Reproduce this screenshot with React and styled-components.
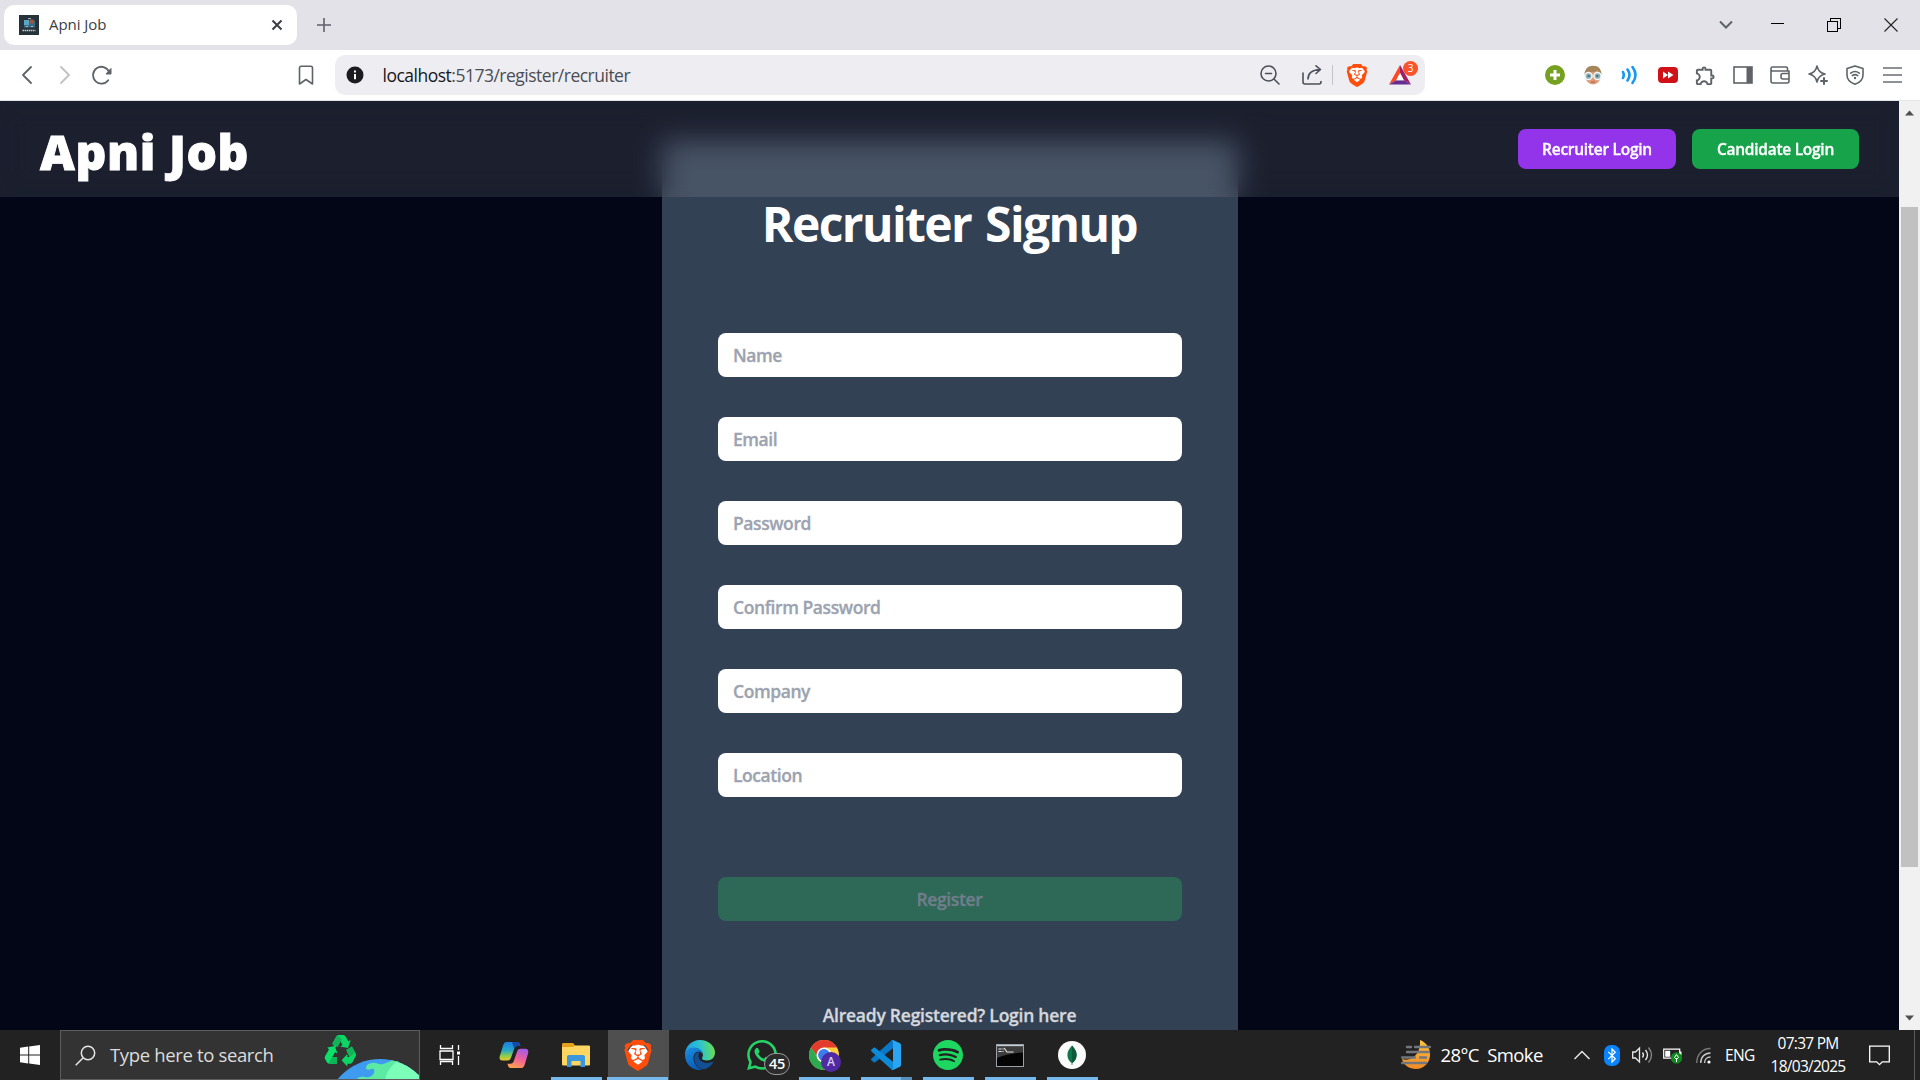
import React from "react";
import styled, { createGlobalStyle } from "styled-components";
import { SiBrave, SiWhatsapp, SiSpotify } from "react-icons/si";
import { MdOutlineExtension } from "react-icons/md";

const Global = createGlobalStyle`
  *, *::before, *::after { box-sizing: border-box; }
  html, body { margin: 0; padding: 0; overflow: hidden; background: #020617; }
  body { font-family: "Open Sans", "Noto Sans", sans-serif; }
  svg { display: block; flex: none; }
  button, input { font: inherit; border: 0; margin: 0; }
`;

const Desktop = styled.div`
  width: 1920px;
  height: 1080px;
  display: flex;
  flex-direction: column;
  overflow: hidden;
`;

/* ---------- browser chrome ---------- */
const TabStrip = styled.div`
  height: 50px;
  flex: none;
  background: #e3e2e8;
  display: flex;
  align-items: center;
  padding-left: 4px;
`;

const Tab = styled.div`
  width: 293px;
  height: 40px;
  border-radius: 10px;
  background: #fff;
  display: flex;
  align-items: center;
  padding: 0 12px 0 15px;
`;

const TabTitle = styled.span`
  flex: 1;
  margin-left: 10px;
  font-size: 15px;
  line-height: 20px;
  letter-spacing: -0.05px;
  color: #3b3e45;
  transform: translateY(-1px);
`;

const NewTab = styled.div`
  margin-left: 20px;
`;

const WindowControls = styled.div`
  margin-left: auto;
  height: 50px;
  display: flex;
  align-items: center;
`;

const Control = styled.div`
  width: ${(p) => p.$w}px;
  display: flex;
  justify-content: center;
`;

const Toolbar = styled.div`
  height: 51px;
  flex: none;
  background: #fff;
  border-bottom: 1px solid #e3e5ea;
  display: flex;
  align-items: center;
  padding-left: 8px;
`;

const NavSlot = styled.div`
  width: 37.5px;
  display: flex;
  justify-content: center;
  margin-left: ${(p) => p.$gap || 0}px;
`;

const Omnibox = styled.div`
  margin-left: 10px;
  width: 1090px;
  height: 40px;
  border-radius: 10px;
  background: #eeedf2;
  display: flex;
  align-items: center;
  padding-left: 11px;
`;

const Url = styled.span`
  flex: 1;
  margin-left: 18.5px;
  font-size: 17.5px;
  line-height: 24px;
  letter-spacing: -0.5px;
  color: #4b4d55;
  transform: translateY(-0.5px);
  b { font-weight: 400; color: #15161a; }
`;

const Separator = styled.div`
  width: 1px;
  height: 20px;
  background: #c3c3ca;
  margin: 0 12px 0 8px;
`;

const BadgeWrap = styled.div`
  position: relative;
  margin: 0 14px 0 20px;
`;

const RewardBadge = styled.span`
  position: absolute;
  top: -4px;
  right: -7px;
  width: 15px;
  height: 15px;
  border-radius: 50%;
  background: #fb542b;
  color: #fff;
  font-size: 10px;
  line-height: 15px;
  text-align: center;
`;

const Extensions = styled.div`
  margin-left: 111.5px;
  display: flex;
  align-items: center;
`;

/* ---------- page ---------- */
const Viewport = styled.div`
  flex: 1;
  min-height: 0;
  display: flex;
`;

const Page = styled.main`
  position: relative;
  flex: 1;
  height: 929px;
  overflow: hidden;
  background: #020617;
  display: flex;
  justify-content: center;
  align-items: flex-start;
  padding-top: 40px;
`;

const Header = styled.header`
  position: absolute;
  inset: 0 0 auto 0;
  height: 96px;
  padding: 0 40px;
  display: flex;
  justify-content: space-between;
  align-items: center;
  background: rgba(255, 255, 255, 0.1);
  backdrop-filter: blur(14px);
`;

const Brand = styled.h1`
  margin: 5px 0 0;
  font-family: "Noto Sans", "Open Sans", sans-serif;
  font-size: 48px;
  line-height: 48px;
  font-weight: 900;
  letter-spacing: 0.6px;
  -webkit-text-stroke: 0.9px currentColor;
  color: #fff;
`;

const HeaderActions = styled.div`
  display: flex;
  gap: 16px;
`;

const LoginButton = styled.button`
  width: ${(p) => p.$w}px;
  height: 40px;
  padding: 0;
  border-radius: 8px;
  background: ${(p) => p.$color};
  color: #fff;
  font-size: 15.5px;
  line-height: 24px;
  font-weight: 600;
  letter-spacing: -0.27px;
  -webkit-text-stroke: 0.3px currentColor;
`;

const Card = styled.form`
  width: 576px;
  height: 1000px;
  padding: 59px 56px;
  background: #334155;
  display: flex;
  flex-direction: column;
`;

const CardTitle = styled.h2`
  margin: 0;
  font-size: 48px;
  line-height: 48px;
  font-weight: 700;
  letter-spacing: -1.6px;
  word-spacing: 3px;
  color: #fff;
  text-align: center;
`;

const Fields = styled.div`
  margin-top: 85px;
  display: flex;
  flex-direction: column;
  gap: 40px;
`;

const Field = styled.input`
  width: 100%;
  height: 44px;
  border-radius: 8px;
  padding: 0 15.5px;
  background: #fff;
  font-size: 17.5px;
  font-weight: 600;
  letter-spacing: -0.42px;
  -webkit-text-stroke: 0.3px #9ca3af;
  &::placeholder { color: #9ca3af; opacity: 1; }
`;

const RegisterButton = styled.button`
  margin-top: 80px;
  height: 44px;
  border-radius: 8px;
  background: #2e6957;
  color: #717e8b;
  font-size: 17.5px;
  font-weight: 600;
  letter-spacing: -0.35px;
  -webkit-text-stroke: 0.3px currentColor;
`;

const LoginHint = styled.p`
  margin: 81px 0 0;
  font-size: 17.5px;
  line-height: 26px;
  font-weight: 600;
  letter-spacing: -0.24px;
  -webkit-text-stroke: 0.3px currentColor;
  color: #d4d8de;
  text-align: center;
`;

const Scrollbar = styled.div`
  width: 21px;
  flex: none;
  background: #f1f1f1;
  display: flex;
  flex-direction: column;
  align-items: center;
  padding: 9px 1px 9px 0;
`;

const Thumb = styled.div`
  width: 17px;
  height: 660px;
  margin-top: 91px;
  margin-bottom: auto;
  background: #c1c1c1;
`;

/* ---------- taskbar ---------- */
const Taskbar = styled.div`
  height: 50px;
  flex: none;
  background: #222222;
  display: flex;
  color: #fff;
`;

const Slot = styled.div`
  position: relative;
  width: ${(p) => p.$w || 62}px;
  height: 50px;
  display: flex;
  align-items: center;
  justify-content: center;
`;

const ActiveTile = styled.div`
  position: absolute;
  inset: 0 0.5px;
  background: #4f4f4f;
`;

const Underline = styled.div`
  position: absolute;
  bottom: 0;
  left: ${(p) => (p.$full ? 0 : 6)}px;
  width: ${(p) => (p.$full ? 61 : 51)}px;
  height: 3px;
  background: ${(p) => (p.$stack ? "linear-gradient(90deg, #76b9ed 40px, #5a8fbd 40px)" : "#76b9ed")};
`;

const IconLayer = styled.div`
  position: relative;
`;

const SearchBox = styled.div`
  width: 360px;
  height: 50px;
  border: 1px solid #5c5c5c;
  background: #333;
  display: flex;
  align-items: center;
  padding-left: 14px;
  overflow: hidden;
`;

const SearchText = styled.span`
  width: 164px;
  margin-left: 14px;
  font-size: 18.5px;
  line-height: 26px;
  letter-spacing: -0.35px;
  white-space: nowrap;
  color: #dcdcdc;
`;

const SearchArt = styled.div`
  margin-left: auto;
`;

const CountBadge = styled.span`
  position: absolute;
  left: 17px;
  top: 13px;
  width: 26px;
  height: 22px;
  border-radius: 11px;
  border: 1px solid #9a9a9a;
  background: #2b2b2b;
  color: #fff;
  font-size: 14.5px;
  font-weight: 600;
  letter-spacing: -0.4px;
  line-height: 20px;
  text-align: center;
`;

const ProfileBadge = styled.span`
  position: absolute;
  left: 12px;
  top: 12px;
  width: 20px;
  height: 20px;
  border-radius: 50%;
  background: #4f2ba3;
  color: #d9cdf2;
  font-size: 12px;
  font-weight: 600;
  line-height: 20px;
  text-align: center;
`;

const Tray = styled.div`
  margin-left: auto;
  width: 519.5px;
  display: flex;
  align-items: center;
`;

const Weather = styled.span`
  width: 104px;
  margin-left: 10px;
  font-size: 18.5px;
  line-height: 26px;
  white-space: pre;
  letter-spacing: -0.6px;
`;

const Lang = styled.span`
  width: 30px;
  margin-left: 14px;
  font-size: 15.5px;
  letter-spacing: -0.6px;
`;

const Clock = styled.div`
  width: 80px;
  margin-left: 13px;
  display: flex;
  flex-direction: column;
  align-items: center;
  font-size: 15.5px;
  line-height: 23px;
  letter-spacing: -0.75px;
  white-space: nowrap;
`;

const Gap = styled.div`
  width: ${(p) => p.$w}px;
  flex: none;
`;

const ShowDesktop = styled.div`
  margin-left: auto;
  width: 6px;
  height: 50px;
  border-left: 1px solid #5a5a5a;
`;

/* ---------- icons ---------- */
const line = { fill: "none", stroke: "#5f6368", strokeWidth: 1.6, strokeLinecap: "round", strokeLinejoin: "round" };

const Favicon = () => (
  <svg width="20" height="20" viewBox="0 0 20 20">
    <rect width="20" height="20" fill="#27333a" />
    <path d="M5 5.500h11v7H5z" fill="#386b86" />
    <path d="M5 5h5v5H5z" fill="#58a6c8" />
    <path d="M11 4.500h3.500v4H11z" fill="#a4553c" />
    <path d="M9 3.600h3M7 11.500h2M12 11.500h2" stroke="#a9bcc4" />
    <path d="M3.500 15.500h13" stroke="#c7cfd2" strokeWidth="1.600" strokeDasharray="1.500 .6" />
  </svg>
);

const BraveIcon = ({ w, h }) => (
  <svg width={w} height={h} viewBox="0 0 24 24" preserveAspectRatio="none">
    <ellipse cx="12" cy="11.500" rx="7.500" ry="8.500" fill="#fff" />
    <SiBrave size={24} color="#ff4d0c" />
  </svg>
);

const Triangle = () => (
  <svg width="22" height="20" viewBox="0 0 22 20">
    <path d="M11 0 0 19.500l7.200-4.300L11 8z" fill="#ff4724" />
    <path d="M11 0l11 19.500-7.200-4.300L11 8z" fill="#9e1f63" />
    <path d="M0 19.500h22l-7.200-4.300H7.200z" fill="#662d91" />
    <path d="M11 8l3.800 7.200H7.200z" fill="#fff" />
  </svg>
);

const Avatar = () => (
  <svg width="20" height="20" viewBox="0 0 20 20">
    <ellipse cx="10" cy="10.500" rx="8" ry="9" fill="#df9a77" />
    <path d="M1.500 10C1.500 4 5 .8 10.200.8S18.500 4 18.500 10c-2-1-3-3-4-4.500C11 8 5 6.500 1.500 10z" fill="#a5855a" />
    <circle cx="5.500" cy="11" r="3.600" fill="#8fb3bd" stroke="#f3f6f6" strokeWidth="1.500" />
    <circle cx="14.500" cy="11" r="3.600" fill="#8fb3bd" stroke="#f3f6f6" strokeWidth="1.500" />
    <circle cx="5.700" cy="11" r="1.200" fill="#4d707b" />
    <circle cx="14.300" cy="11" r="1.200" fill="#4d707b" />
    <path d="M8 17h4" stroke="#b45a4e" />
  </svg>
);

const CopilotIcon = () => (
  <svg width="30" height="26" viewBox="0 0 30 28" preserveAspectRatio="none">
    <defs>
      <linearGradient id="cpA" x1="0" y1="0" x2="0" y2="1">
        <stop offset="0" stopColor="#1a7fe0" />
        <stop offset=".45" stopColor="#27a7c9" />
        <stop offset=".75" stopColor="#8ccf4a" />
        <stop offset="1" stopColor="#f2c52e" />
      </linearGradient>
      <linearGradient id="cpB" x1=".7" y1="0" x2=".3" y2="1">
        <stop offset="0" stopColor="#a55be8" />
        <stop offset=".5" stopColor="#f0609a" />
        <stop offset="1" stopColor="#ffa24d" />
      </linearGradient>
    </defs>
    <path d="M7.500 0H18c2 0 2.800 1.500 3.300 4.300h-2.800c-2 0-2.700 1-3.300 3L12 17c-.7 2-1.700 3-3.500 3H3.500C.5 20 0 17.500 1 14.500L4 4C4.700 1.500 5.700 0 7.500 0z" fill="url(#cpA)" />
    <path d="M13 0h5c2 0 2.800 1.500 3.300 4.300h-2.800c-2 0-2.700 1-3.300 3z" fill="#1749a8" />
    <path d="M22.500 28H12c-2 0-3-1.500-3.500-4.500h2.800c2 0 2.900-1 3.500-3L18 10.500c.7-2.200 1.700-3.200 3.500-3.200h4.800c3 0 3.500 2.500 2.600 5.500L26 23.500c-.7 2.700-1.700 4.500-3.500 4.500z" fill="url(#cpB)" />
  </svg>
);

const ExplorerIcon = () => (
  <svg width="28" height="24" viewBox="0 0 28 24">
    <path d="M0 1.500C0 .6.500 0 1.500 0H11l2.500 3H28v4H0z" fill="#e3a21a" />
    <path d="M0 4h11l2-1.500h13.500c1 0 1.500.5 1.500 1.500v17c0 1-.5 1.500-1.500 1.500h-25C.5 22.500 0 22 0 21z" fill="#ffd661" />
    <path d="M5 24V14c0-1.200.8-2 2-2h14c1.200 0 2 .8 2 2v10h-4.500v-6h-9v6z" fill="#3a96dd" />
  </svg>
);

const EdgeIcon = () => (
  <svg width="30" height="30" viewBox="0 0 30 30">
    <defs>
      <linearGradient id="edA" x1="0" y1=".4" x2="1" y2=".3">
        <stop offset="0" stopColor="#1f9fe0" />
        <stop offset=".5" stopColor="#2cc3d2" />
        <stop offset="1" stopColor="#6be04a" />
      </linearGradient>
      <linearGradient id="edB" x1="0" y1="0" x2=".4" y2="1">
        <stop offset="0" stopColor="#1b8fe0" />
        <stop offset="1" stopColor="#0a5cb8" />
      </linearGradient>
    </defs>
    <path d="M0 15C0 6.500 6.500 0 15 0s15 6 15 12.500c0 5-3.500 8-8 8-3 0-5-1-5-2.300 0-1 1-1.400 1-3.200 0-2.500-2.500-4.500-6-4.500C5 10.500 0 13 0 15z" fill="url(#edA)" />
    <path d="M0 15c0-4.500 4-7.500 9-7.500 5.500 0 9 3.200 9 7.500-.5-2.300-2.300-3.500-4.500-3.500-3 0-5 3-5 6.500 0 5.500 4 10.500 9 11.800C7.500 31.500 0 24 0 15z" fill="url(#edB)" />
    <path d="M9.500 16c-1.500 7 4.500 14 10 13.300 3.700-1 7-3.700 8.700-6.800.3-.7-.3-1-.9-.7-4.800 2.400-11.300 1-13.300-3.300-1-2.300-.5-4.500.7-6.500-2.500 0-4.600 1.500-5.200 4z" fill="#134f94" />
  </svg>
);

const ChromeIcon = () => (
  <svg width="30" height="30" viewBox="0 0 30 30">
    <circle cx="15" cy="15" r="15" fill="#ffcd40" />
    <path d="M2 7.500A15 15 0 0 0 15 30l6.500-11.200A7.500 7.500 0 0 1 8.500 18.800z" fill="#2da94f" />
    <path d="M2 7.500l6.500 11.300L9 11z" fill="#2da94f" />
    <path d="M2 7.500A15 15 0 0 1 28 7.500H15L8 15z" fill="#e33b2e" />
    <circle cx="15" cy="15" r="7.500" fill="#fff" />
    <circle cx="15" cy="15" r="5.900" fill="#3b7ded" />
  </svg>
);

const VsCodeIcon = () => (
  <svg width="30" height="30" viewBox="0 0 30 30">
    <path d="M22 0v8.200L4.200 22.300c-.5.400-1.100.4-1.500 0L.5 20.400c-.6-.5-.6-1.300 0-1.800L20.500.5c.5-.4 1-.6 1.500-.5z" fill="#0a78c8" />
    <path d="M22 30v-8.200L4.200 7.700c-.5-.4-1.100-.4-1.500 0L.5 9.600c-.6.500-.6 1.300 0 1.800l20 18.100c.5.400 1 .6 1.500.5z" fill="#0d8ad8" />
    <path d="M22 0l7 3.300c.6.300 1 .9 1 1.600v20.200c0 .7-.4 1.300-1 1.600L22 30c-.8.100-1.500-.2-2-.7.900.700 2 .2 2-1V1.700c0-1.200-1.200-1.700-2-1 .5-.5 1.200-.8 2-.7z" fill="#2aa5f2" />
  </svg>
);

const CmdIcon = () => (
  <svg width="28" height="23" viewBox="0 0 28 23">
    <rect x=".5" y=".5" width="27" height="22" fill="#050505" stroke="#9aa2a8" />
    <path d="M1 1h26v1.500H1z" fill="#c5ced4" />
    <path d="M1 2.500h26v6C18 9 8 10.500 1 14z" fill="#3c3c3c" />
    <path d="M3 5h2M3 7.500h2M7 5v0M7 7.500v0M8.500 4.500l2.500 3.500M12 8h5" stroke="#e0e0e0" strokeWidth="1.200" strokeLinecap="square" fill="none" />
  </svg>
);

const MongoIcon = () => (
  <svg width="28" height="28" viewBox="0 0 28 28">
    <circle cx="14" cy="14" r="14" fill="#fbfbfb" />
    <path d="M14 4.500c3 3.500 4.600 6 4.600 9.500 0 3.600-1.900 6.200-4.200 8V24h-.8v-2c-2.300-1.800-4.200-4.400-4.200-8C9.400 10.500 11 8 14 4.500z" fill="#12744a" />
    <path d="M14 4.500c3 3.500 4.600 6 4.600 9.500 0 3.600-1.900 6.200-4.200 8H14z" fill="#0b5a3a" />
  </svg>
);

const SearchArtwork = () => (
  <svg width="100" height="48" viewBox="320 1031 100 48">
    <defs>
      <clipPath id="globe"><circle cx="381" cy="1113.500" r="54.500" /></clipPath>
    </defs>
    <path d="M333.300 1043.800l4-7.300c.6-1 1.500-1.500 2.600-1.500h4c1.200 0 2.200.5 2.800 1.600l2.600 4.700 2.400-1.200-2.600 8-8-1.700 2.400-1.300-2.700-5-4.200 7.300z" fill="#0cd663" />
    <path d="M333.300 1043.800l4-7.300 2.600-.5 3 3.500-4.300 7.700z" fill="#12b357" />
    <path d="M328.300 1047.500l7.400-1.600 2.800 7.600-2.500-1.200-2.700 4.700h4.500v6.700h-7.200c-1.300 0-2.200-.5-2.800-1.600l-1.600-2.800c-.6-1-.6-2.200 0-3.200l3.800-6.600z" fill="#0ae06a" />
    <path d="M329.500 1063.200l3.800-6.200h4.500v6.700h-7.200z" fill="#0cb555" />
    <path d="M347.300 1050l5.600-3.400 3.600 6.300c.7 1.100.7 2.300.1 3.400l-3 5.600c-.6 1.200-1.500 1.800-2.800 1.800h-2.500v2.800l-5.700-6.200 5.700-6.300v3h2.300z" fill="#0cd663" />
    <path d="M347.300 1050l5.600-3.400 3.300 5.800-5.600 4.600z" fill="#12b357" />
    <g clipPath="url(#globe)">
      <rect x="320" y="1050" width="110" height="40" fill="#3f9bf0" />
      <path d="M398 1055c-5 6-8 7-14 9-4 1-7-2-11-1-3 .6-6 2-6 5 0 2 3 2 5 1 3-1 4 1 3 4-2 4-6 5-9 4-4-1-8 0-9 4h70v-30z" fill="#5ceaa3" />
      <path d="M403 1057c-10 8-16 14-17 24h40v-24z" fill="#7bffb9" />
    </g>
  </svg>
);

const WeatherIcon = () => (
  <svg width="30" height="30" viewBox="0 0 30 30">
    <defs>
      <linearGradient id="mn" x1="0" y1="0" x2="0" y2="1">
        <stop offset="0" stopColor="#ffc43d" />
        <stop offset="1" stopColor="#f08a24" />
      </linearGradient>
    </defs>
    <path d="M19 0c6.500 2.500 10 8 10 14.500A14 14 0 0 1 15 29C8 29 2.500 25 1 19c10 3 19-5 18-19z" fill="url(#mn)" />
    <path d="M6 7h4M14 7h15M6 12h22M1 17.500h13M19 17.500h6M1 23h24" stroke="#73777c" strokeWidth="2.400" strokeLinecap="round" />
  </svg>
);

const apps = [
  { id: "copilot", icon: <CopilotIcon /> },
  { id: "explorer", icon: <ExplorerIcon />, open: true },
  { id: "brave", icon: <BraveIcon w={32} h={31} />, open: true, active: true },
  { id: "edge", icon: <EdgeIcon /> },
  { id: "whatsapp", icon: <SiWhatsapp size={30} color="#25d366" />, badge: <CountBadge>45</CountBadge> },
  { id: "chrome", icon: <ChromeIcon />, badge: <ProfileBadge>A</ProfileBadge>, open: true },
  { id: "vscode", icon: <VsCodeIcon />, open: true, stack: true },
  { id: "spotify", icon: <SiSpotify size={30} color="#1ed760" />, open: true },
  { id: "cmd", icon: <CmdIcon />, open: true },
  { id: "mongo", icon: <MongoIcon />, open: true },
];

const fields = [
  ["Name", "text"],
  ["Email", "email"],
  ["Password", "password"],
  ["Confirm Password", "password"],
  ["Company", "text"],
  ["Location", "text"],
];

export default function App() {
  return (
    <Desktop>
      <Global />
      <TabStrip>
        <Tab>
          <Favicon />
          <TabTitle>Apni Job</TabTitle>
          <svg width="16" height="16" viewBox="0 0 16 16"><path d="M3.500 3.500l9 9M12.500 3.500l-9 9" stroke="#3b3e45" strokeWidth="2" /></svg>
        </Tab>
        <NewTab><svg width="14" height="14" viewBox="0 0 14 14"><path d="M7 0v14M0 7h14" stroke="#5f6268" strokeWidth="1.600" /></svg></NewTab>
        <WindowControls>
          <Control $w={45}><svg width="14" height="10" viewBox="0 0 14 10"><path d="M1 1.500l6 6 6-6" fill="none" stroke="#5f6268" strokeWidth="2" /></svg></Control>
          <Control $w={57}><svg width="14" height="14"><path d="M1 5.500h13" stroke="#000" /></svg></Control>
          <Control $w={57}><svg width="14" height="14" shapeRendering="crispEdges"><path d="M.5 3.500h10v10H.500zM3.500 3V.5h10v10H11" fill="none" stroke="#000" /></svg></Control>
          <Control $w={58}><svg width="14" height="14"><path d="M.5.5l13 13M13.500.5l-13 13" stroke="#222" strokeWidth="1.100" /></svg></Control>
        </WindowControls>
      </TabStrip>

      <Toolbar>
        <NavSlot><svg width="20" height="20" viewBox="0 0 20 20"><path d="M14 2l-8 8 8 8" {...line} strokeWidth="1.800" /></svg></NavSlot>
        <NavSlot><svg width="20" height="20" viewBox="0 0 20 20"><path d="M7 2l8 8-8 8" {...line} stroke="#bfc1c4" strokeWidth="1.800" /></svg></NavSlot>
        <NavSlot>
          <svg width="20" height="20" viewBox="0 0 20 20">
            <path d="M16.200 15.200A8.400 8.400 0 1 1 17 6.500" {...line} strokeWidth="1.800" />
            <path d="M19 3.500v5.500h-5z" fill="#5f6368" stroke="#5f6368" strokeLinejoin="round" />
          </svg>
        </NavSlot>
        <NavSlot $gap={167}><svg width="16" height="20" viewBox="0 0 16 20"><path d="M1.500 3c0-1 .7-1.700 1.700-1.700h9.600c1 0 1.700.7 1.700 1.700v16L8 14.500 1.500 19z" {...line} /></svg></NavSlot>
        <Omnibox>
          <svg width="18" height="18" viewBox="0 0 18 18">
            <circle cx="9" cy="9" r="8.500" fill="#1b1b20" />
            <path d="M9 8v5.200M9 4.500v1.900" stroke="#fff" strokeWidth="2" />
          </svg>
          <Url><b>localhost</b>:5173/register/recruiter</Url>
          <svg width="20" height="20" viewBox="0 0 20 20"><circle cx="8.500" cy="8.500" r="7.500" {...line} stroke="#4e5058" /><path d="M5.500 8.500h6M14 14l5 5" {...line} stroke="#4e5058" /></svg>
          <Gap $w={22} />
          <svg width="20" height="20" viewBox="0 0 20 20"><path d="M1 8v9c0 1.200.8 2 2 2h14c1.200 0 2-.8 2-2v-.5M6 14c0-5.500 3-9 12-9.500M14 .8l4.500 3.700L14 8.500" {...line} stroke="#4e5058" /></svg>
          <Gap $w={2} />
          <Separator />
          <BraveIcon w={24} h={23} />
          <BadgeWrap>
            <Triangle />
            <RewardBadge>3</RewardBadge>
          </BadgeWrap>
        </Omnibox>
        <Extensions>
          <NavSlot><svg width="20" height="20"><circle cx="10" cy="10" r="10" fill="#76a020" /><path d="M10 5v10M5 10h10" stroke="#fff" strokeWidth="3" /></svg></NavSlot>
          <NavSlot><Avatar /></NavSlot>
          <NavSlot><svg width="18" height="20" viewBox="0 0 18 20"><path d="M2 7q1.500 3 0 6M6.500 4.500q4 5.500 0 11M11.500 2q6 8 0 16" fill="none" stroke="#1696f5" strokeWidth="2.600" strokeLinecap="round" /></svg></NavSlot>
          <NavSlot><svg width="20" height="16" viewBox="0 0 20 16"><rect width="20" height="16" rx="4" fill="#d01218" /><path d="M5 4.500l5 3.500-5 3.500zM10 4.500l5.500 3.500-5.500 3.500z" fill="#fff" /></svg></NavSlot>
          <NavSlot><MdOutlineExtension size={23} color="#5f6368" /></NavSlot>
          <NavSlot><svg width="20" height="18"><rect x="1" y="1" width="18" height="16" fill="none" stroke="#5f6368" strokeWidth="1.600" /><path d="M13.500 1h5.500v16h-5.500z" fill="#5f6368" /></svg></NavSlot>
          <NavSlot><svg width="20" height="18" viewBox="0 0 20 18"><path d="M17.500 5V2.500c0-1-.5-1.500-1.500-1.500H2.500C1.500 1 1 1.500 1 2.500V15c0 1.200.8 2 2 2h14c1.200 0 2-.8 2-2V5H2.500C1.500 5 1 4.300 1 3.500M19 7.500h-6c-1.200 0-2 .8-2 2v1.500c0 1.200.8 2 2 2h6" {...line} /></svg></NavSlot>
          <NavSlot><svg width="20" height="20" viewBox="0 0 20 20"><path d="M9 1c1 5 3 7 8 8-5 1-7 3-8 8-1-5-3-7-8-8 5-1 7-3 8-8z" {...line} /><path d="M16 13v6M13 16h6" {...line} strokeWidth="2" /></svg></NavSlot>
          <NavSlot><svg width="18" height="20" viewBox="0 0 18 20"><path d="M9 .9l8 2.600v6.500c0 4.500-3 7.500-8 9.200-5-1.700-8-4.700-8-9.200V3.500zM4.800 8.200q4.200-3.400 8.400 0M6.300 10.600q2.700-2 5.400 0" {...line} /><circle cx="9" cy="13" r="1.200" fill="#5f6368" /></svg></NavSlot>
          <NavSlot><svg width="19" height="16"><path d="M0 1h19M0 8h19M0 15h19" stroke="#6b6e74" strokeWidth="1.500" /></svg></NavSlot>
        </Extensions>
      </Toolbar>

      <Viewport>
        <Page>
          <Card>
            <CardTitle>Recruiter Signup</CardTitle>
            <Fields>
              {fields.map(([label, type]) => (
                <Field key={label} type={type} placeholder={label} />
              ))}
            </Fields>
            <RegisterButton type="button" disabled>Register</RegisterButton>
            <LoginHint>Already Registered? Login here</LoginHint>
          </Card>
          <Header>
            <Brand>Apni Job</Brand>
            <HeaderActions>
              <LoginButton $w={158} $color="#9333ea">Recruiter Login</LoginButton>
              <LoginButton $w={167} $color="#16a34a">Candidate Login</LoginButton>
            </HeaderActions>
          </Header>
        </Page>
        <Scrollbar>
          <svg width="9" height="6"><path d="M0 5.500L4.500.5 9 5.500z" fill="#505050" /></svg>
          <Thumb />
          <svg width="9" height="6"><path d="M0 .5h9L4.500 5.500z" fill="#505050" /></svg>
        </Scrollbar>
      </Viewport>

      <Taskbar>
        <Slot $w={60}>
          <svg width="20" height="20" viewBox="0 0 20 20"><path d="M0 2.700L8.200 1.500v8H0zM9.200 1.400L20 0v9.500H9.200zM0 10.500h8.200v8L0 17.300zM9.200 10.500H20V20L9.200 18.600z" fill="#fff" /></svg>
        </Slot>
        <SearchBox>
          <svg width="21" height="21" viewBox="0 0 21 21"><circle cx="13" cy="8" r="6.700" fill="none" stroke="#e6e6e6" strokeWidth="1.500" /><path d="M8.200 12.800L.7 20.300" stroke="#e6e6e6" strokeWidth="1.500" /></svg>
          <SearchText>Type here to search</SearchText>
          <SearchArt><SearchArtwork /></SearchArt>
        </SearchBox>
        <Slot $w={60}>
          <svg width="22" height="20" viewBox="0 0 22 20" fill="none" stroke="#fff" strokeWidth="1.300"><path d="M1.500 0v3.500h12V0M1 6h13v8.500H1zM1.500 20v-3.500h12V20M19.500 0v5M19.500 11v9" /><path d="M18 6.500h3v3h-3z" fill="#fff" stroke="none" /></svg>
        </Slot>
        <Gap $w={3} />
        {apps.map((a) => (
          <Slot key={a.id}>
            {a.active && <ActiveTile />}
            <IconLayer>{a.icon}{a.badge}</IconLayer>
            {a.open && <Underline $full={a.active} $stack={a.stack} />}
          </Slot>
        ))}
        <Tray>
          <WeatherIcon />
          <Weather>{"28°C  Smoke"}</Weather>
          <Gap $w={29.5} />
          <svg width="16" height="10"><path d="M.5 9L8 1.500 15.500 9" fill="none" stroke="#e8e8e8" strokeWidth="1.500" /></svg>
          <Gap $w={14} />
          <svg width="16" height="21" viewBox="0 0 16 21"><rect width="16" height="21" rx="7" fill="#0a84ff" /><path d="M4.300 6.800l7 7L8 17V4l3.300 3.200-7 7" fill="none" stroke="#fff" strokeWidth="1.200" /></svg>
          <Gap $w={12} />
          <svg width="21" height="18" viewBox="0 0 21 18" fill="none" stroke="#e8e8e8" strokeWidth="1.300"><path d="M.7 6h2.800L7.500 2v14L3.500 12H.700z" /><path d="M10.500 6.500q2 2.500 0 5M13.500 4q4 5 0 10" /><path d="M16.500 1.500q6 7.500 0 15" stroke="#8b8b8b" /></svg>
          <Gap $w={10} />
          <svg width="20" height="18" viewBox="0 0 20 18"><path d="M.7 3.200h16v9h-16z" fill="none" stroke="#fff" strokeWidth="1.200" /><path d="M2.200 4.700h5v6h-5zM17 5.500h1.500v4H17z" fill="#fff" /><circle cx="13.500" cy="12" r="5.700" fill="#0f8a1e" /><path d="M13.500 8.500l2 3-2 2-2-2zM13.500 12v4" fill="none" stroke="#fff" /></svg>
          <Gap $w={13} />
          <svg width="15" height="17" viewBox="0 0 15 17" fill="none" strokeWidth="1.400"><path d="M.7 16C.7 8 6 1.500 14.500 1.500" stroke="#777" /><path d="M4.700 16c0-6 4-10 9.800-10M8.500 16c0-3.500 2.500-6 6-6" stroke="#ccc" /><circle cx="13" cy="15" r="1.600" fill="#fff" /></svg>
          <Lang>ENG</Lang>
          <Clock><span>07:37 PM</span><span>18/03/2025</span></Clock>
          <Gap $w={21} />
          <svg width="21" height="21" viewBox="0 0 21 21"><path d="M.7 1.200h19.600v15.600h-7l-2.800 2.800-2.800-2.800h-7z" fill="none" stroke="#fff" strokeWidth="1.300" /></svg>
          <ShowDesktop />
        </Tray>
      </Taskbar>
    </Desktop>
  );
}
